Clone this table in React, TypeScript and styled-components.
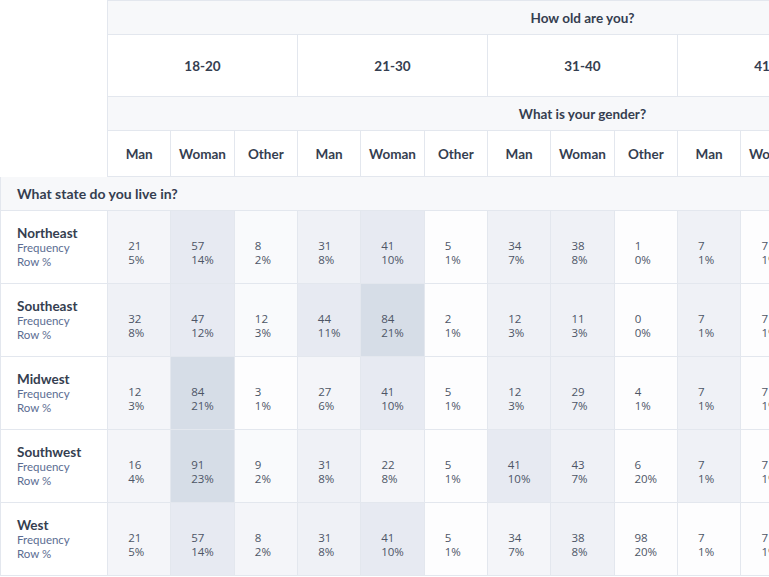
import React from "react";
import styled, { createGlobalStyle } from "styled-components";

const Global = createGlobalStyle`
  html, body { margin: 0; padding: 0; background: #ffffff; overflow: hidden; }
  body { font-family: Lato, "Noto Sans", sans-serif; }
`;

const BORDER = "#e3e7ee";
const HEAD_BG = "#f7f8fa";

const Viewport = styled.div`
  width: 769px;
  height: 577px;
  overflow: hidden;
`;

const Grid = styled.div`
  display: grid;
  grid-template-columns: 107px repeat(15, 63.333px);
  grid-template-rows: 35px 62px 34px 46px 34px repeat(5, 73px);
  width: 1057px;
`;

const Corner = styled.div`
  grid-column: 1;
  grid-row: 1 / span 4;
  background: #ffffff;
`;

const HeadText = styled.div`
  display: flex;
  align-items: center;
  justify-content: center;
  border-left: 1px solid ${BORDER};
  border-bottom: 1px solid ${BORDER};
  font-family: Lato, "Noto Sans", sans-serif;
  font-weight: 700;
  font-size: 13.5px;
  color: #353e50;
`;

const QuestionHead = styled(HeadText)<{ $row: number; $first?: boolean }>`
  grid-column: 2 / span 15;
  grid-row: ${(p) => p.$row};
  background: ${HEAD_BG};
  border-top: ${(p) => (p.$first ? `1px solid ${BORDER}` : "none")};
`;

const GroupHead = styled(HeadText)<{ $col: number }>`
  grid-column: ${(p) => p.$col} / span 3;
  grid-row: 2;
  background: #ffffff;
`;

const SubHead = styled(HeadText)<{ $col: number }>`
  grid-column: ${(p) => p.$col};
  grid-row: 4;
  background: #ffffff;
`;

const SectionRow = styled.div`
  grid-column: 1 / span 16;
  grid-row: 5;
  background: ${HEAD_BG};
  border-left: 1px solid ${BORDER};
  border-bottom: 1px solid ${BORDER};
  display: flex;
  align-items: center;
  padding-left: 16px;
  font-family: Lato, "Noto Sans", sans-serif;
  font-weight: 700;
  font-size: 14px;
  color: #353e50;
`;

const RowLabel = styled.div<{ $row: number }>`
  grid-column: 1;
  grid-row: ${(p) => p.$row};
  background: #ffffff;
  border-left: 1px solid ${BORDER};
  border-bottom: 1px solid ${BORDER};
  display: flex;
  flex-direction: column;
  justify-content: center;
  padding-left: 16px;
  font-family: Lato, "Noto Sans", sans-serif;
`;

const LabelTitle = styled.span`
  font-weight: 700;
  font-size: 13.5px;
  line-height: 15px;
  color: #353e50;
`;

const LabelSub = styled.span`
  font-weight: 400;
  font-size: 11.5px;
  line-height: 13.5px;
  color: #5b6d92;
`;

const DataCell = styled.div<{ $row: number; $col: number; $bg: string }>`
  grid-column: ${(p) => p.$col};
  grid-row: ${(p) => p.$row};
  background: ${(p) => p.$bg};
  border-left: 1px solid ${BORDER};
  border-bottom: 1px solid ${BORDER};
  display: flex;
  align-items: center;
  justify-content: center;
`;

const DataValue = styled.div`
  font-family: "Open Sans", "Noto Sans", sans-serif;
  font-weight: 400;
  font-size: 11.5px;
  line-height: 13.5px;
  color: #4d5566;
  text-align: left;
  min-width: 22px;
  padding-top: 11px;
`;

const shade: Record<string, string> = {
  W: "#fdfdfe",
  A: "#f9fafc",
  B: "#f4f5f9",
  C: "#eff1f6",
  D: "#e7eaf2",
  E: "#d6dde7",
};

const ages = ["18-20", "21-30", "31-40", "41-50", "51+"];
const genders = ["Man", "Woman", "Other"];

type Row = { name: string; cells: [string, string, string][] };

const tail: [string, string, string][] = [
  ["7", "1%", "W"], ["3", "1%", "W"], ["5", "1%", "W"], ["4", "1%", "W"], ["2", "0%", "W"],
];

const rows: Row[] = [
  {
    name: "Northeast",
    cells: [
      ["21", "5%", "B"], ["57", "14%", "D"], ["8", "2%", "A"],
      ["31", "8%", "C"], ["41", "10%", "D"], ["5", "1%", "W"],
      ["34", "7%", "C"], ["38", "8%", "C"], ["1", "0%", "W"],
      ["7", "1%", "C"], ...tail,
    ],
  },
  {
    name: "Southeast",
    cells: [
      ["32", "8%", "C"], ["47", "12%", "D"], ["12", "3%", "A"],
      ["44", "11%", "D"], ["84", "21%", "E"], ["2", "1%", "W"],
      ["12", "3%", "C"], ["11", "3%", "C"], ["0", "0%", "W"],
      ["7", "1%", "C"], ...tail,
    ],
  },
  {
    name: "Midwest",
    cells: [
      ["12", "3%", "B"], ["84", "21%", "E"], ["3", "1%", "W"],
      ["27", "6%", "B"], ["41", "10%", "D"], ["5", "1%", "W"],
      ["12", "3%", "C"], ["29", "7%", "C"], ["4", "1%", "W"],
      ["7", "1%", "C"], ...tail,
    ],
  },
  {
    name: "Southwest",
    cells: [
      ["16", "4%", "B"], ["91", "23%", "E"], ["9", "2%", "A"],
      ["31", "8%", "C"], ["22", "8%", "B"], ["5", "1%", "W"],
      ["41", "10%", "D"], ["43", "7%", "C"], ["6", "20%", "W"],
      ["7", "1%", "C"], ...tail,
    ],
  },
  {
    name: "West",
    cells: [
      ["21", "5%", "B"], ["57", "14%", "D"], ["8", "2%", "B"],
      ["31", "8%", "C"], ["41", "10%", "D"], ["5", "1%", "W"],
      ["34", "7%", "B"], ["38", "8%", "C"], ["98", "20%", "W"],
      ["7", "1%", "W"], ...tail,
    ],
  },
];

export default function App() {
  return (
    <>
      <Global />
      <Viewport>
        <Grid>
          <Corner />
          <QuestionHead $row={1} $first>How old are you?</QuestionHead>
          {ages.map((a, i) => (
            <GroupHead key={a} $col={2 + i * 3}>{a}</GroupHead>
          ))}
          <QuestionHead $row={3}>What is your gender?</QuestionHead>
          {ages.flatMap((a, i) =>
            genders.map((g, j) => (
              <SubHead key={a + g} $col={2 + i * 3 + j}>{g}</SubHead>
            ))
          )}
          <SectionRow>What state do you live in?</SectionRow>
          {rows.map((r, ri) => (
            <React.Fragment key={r.name}>
              <RowLabel $row={6 + ri}>
                <LabelTitle>{r.name}</LabelTitle>
                <LabelSub>Frequency</LabelSub>
                <LabelSub>Row %</LabelSub>
              </RowLabel>
              {r.cells.map(([n, p, s], ci) => (
                <DataCell key={ci} $row={6 + ri} $col={2 + ci} $bg={shade[s]}>
                  <DataValue>
                    {n}
                    <br />
                    {p}
                  </DataValue>
                </DataCell>
              ))}
            </React.Fragment>
          ))}
        </Grid>
      </Viewport>
    </>
  );
}
